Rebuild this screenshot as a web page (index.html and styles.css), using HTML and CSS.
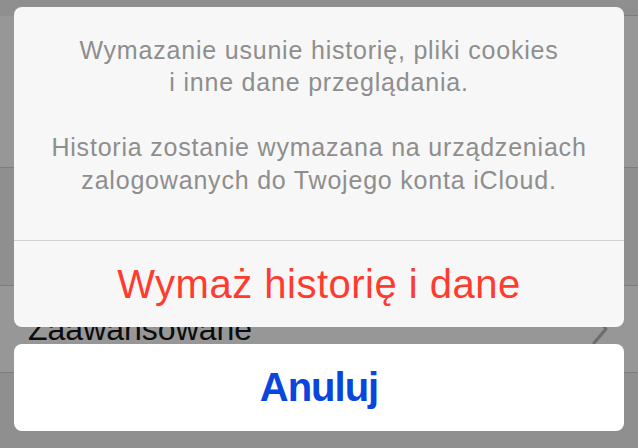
FILE: index.html
```html
<!DOCTYPE html>
<html lang="pl">
<head>
    <meta charset="UTF-8">
    <meta name="viewport" content="width=device-width, initial-scale=1.0">
    <title>Safari</title>
    <link rel="stylesheet" href="styles.css">
</head>
<body>

<div class="settings">
    <div class="band band-dark band-top"></div>
    <div class="sep sep-inset"></div>
    <div class="band band-light band-cell"></div>
    <div class="sep"></div>
    <div class="band band-dark band-gap"></div>
    <div class="sep"></div>
    <div class="band band-light settings-row">
        <span class="row-label">Zaawansowane</span>
        <svg class="chevron" width="18" height="32" viewBox="0 0 18 32">
            <path d="M3 2 L15 16 L3 30" fill="none" stroke="#6c6c6c" stroke-width="3" stroke-linecap="round" stroke-linejoin="round"/>
        </svg>
    </div>
    <div class="sep"></div>
    <div class="band band-dark band-rest"></div>
</div>

<div class="sheet-overlay">
    <div class="sheet">
        <div class="sheet-message">
            <p>Wymazanie usunie historię, pliki cookies<br>i inne dane przeglądania.</p>
            <p>Historia zostanie wymazana na urządzeniach<br>zalogowanych do Twojego konta iCloud.</p>
        </div>
        <button class="sheet-action destructive">Wymaż historię i dane</button>
    </div>
    <button class="sheet-action sheet-cancel">Anuluj</button>
</div>

</body>
</html>
```

FILE: styles.css
```css
body {
    font-family: 'Liberation Sans', Arial, sans-serif;
    margin: 0;
    padding: 0;
    width: 638px;
    height: 448px;
    overflow: hidden;
    position: relative;
    background-color: #8f8f8f;
}

/* dimmed settings list behind the sheet */
.settings {
    display: flex;
    flex-direction: column;
    height: 100%;
}

.band-dark {
    background-color: #8f8f8f;
}

.band-light {
    background-color: #979797;
}

.band-top {
    height: 15px;
}

.band-cell {
    height: 151px;
}

.band-gap {
    height: 117px;
}

.band-rest {
    flex: 1;
}

.sep {
    height: 1px;
    background-color: #7c7c7c;
}

.sep-inset {
    margin-left: 30px;
}

.settings-row {
    height: 86px;
    display: flex;
    align-items: center;
    justify-content: space-between;
    padding: 0 29px 0 28px;
}

.row-label {
    font-size: 32px;
    color: #0c0c0c;
}

.chevron {
    display: block;
}

/* action sheet */
.sheet-overlay {
    position: absolute;
    top: 0;
    left: 0;
    right: 0;
    bottom: 0;
    display: flex;
    flex-direction: column;
    justify-content: flex-end;
    gap: 17px;
    padding: 6px 14px 17px;
}

.sheet {
    background-color: #f7f7f7;
    border-radius: 8px;
    overflow: hidden;
    display: flex;
    flex-direction: column;
}

.sheet-message {
    padding: 27px 10px 44px;
    border-bottom: 1px solid #d2d2d6;
    text-align: center;
    color: #8e8e8e;
    font-size: 25px;
    line-height: 32.5px;
    letter-spacing: 0.8px;
}

.sheet-message p {
    margin: 0;
}

.sheet-message p + p {
    margin-top: 32.5px;
}

.sheet-action {
    font-family: inherit;
    height: 86px;
    border: none;
    padding: 0;
    background: none;
    font-size: 40px;
    text-align: center;
    cursor: pointer;
}

.destructive {
    color: #ff3b30;
    letter-spacing: 0.5px;
}

.sheet-cancel {
    height: 87px;
    background-color: #ffffff;
    border-radius: 8px;
    color: #0846dc;
    font-weight: bold;
    letter-spacing: -1px;
}
```
